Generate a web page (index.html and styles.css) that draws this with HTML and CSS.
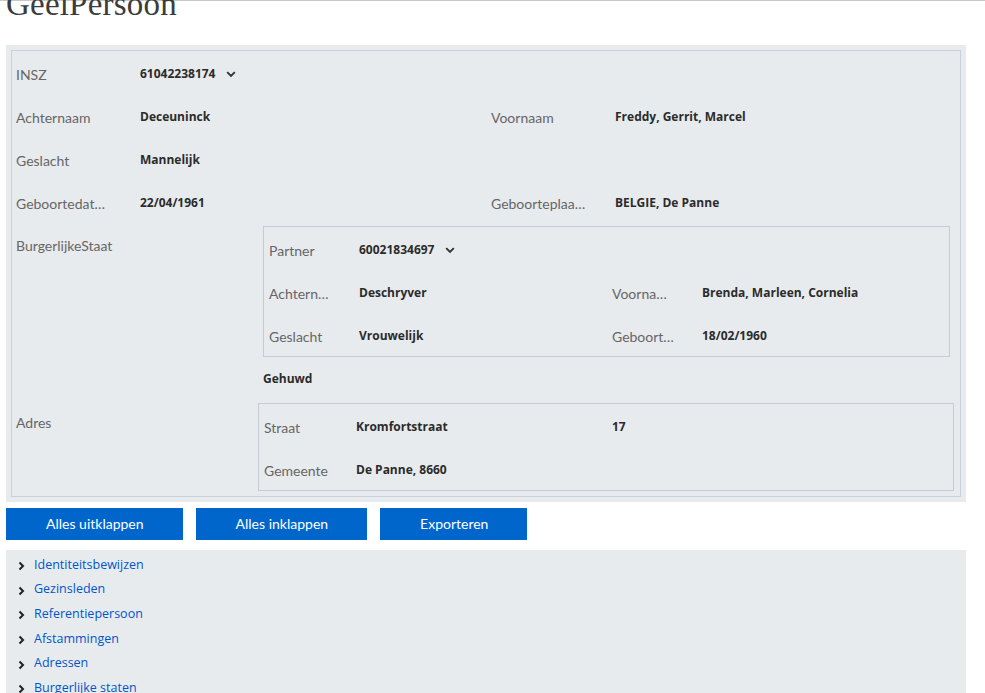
FILE: index.html
```html
<!DOCTYPE html>
<html lang="nl">
<head>
<meta charset="utf-8">
<title>GeelPersoon</title>
<link rel="stylesheet" href="styles.css">
</head>
<body>
<header class="page-header">
  <h1 class="page-title">GeelPersoon</h1>
</header>

<section class="record">
  <div class="record-inner">
    <div class="row">
      <div class="field">
        <span class="label">INSZ</span>
        <span class="value">61042238174</span>
        <svg class="chev-down" width="10" height="7" viewBox="0 0 10 7"><polyline points="1.2,1.2 5,5 8.8,1.2" fill="none" stroke="#333" stroke-width="1.9"/></svg>
      </div>
    </div>
    <div class="row">
      <div class="field">
        <span class="label">Achternaam</span>
        <span class="value">Deceuninck</span>
      </div>
      <div class="field field--right">
        <span class="label">Voornaam</span>
        <span class="value">Freddy, Gerrit, Marcel</span>
      </div>
    </div>
    <div class="row">
      <div class="field">
        <span class="label">Geslacht</span>
        <span class="value">Mannelijk</span>
      </div>
    </div>
    <div class="row">
      <div class="field">
        <span class="label">Geboortedat…</span>
        <span class="value">22/04/1961</span>
      </div>
      <div class="field field--right">
        <span class="label">Geboorteplaa…</span>
        <span class="value">BELGIE, De Panne</span>
      </div>
    </div>

    <div class="complex">
      <span class="label label--wide">BurgerlijkeStaat</span>
      <div class="nested">
        <div class="subbox subbox--partner">
          <div class="row">
            <div class="field field--sub">
              <span class="label label--sub">Partner</span>
              <span class="value">60021834697</span>
              <svg class="chev-down" width="10" height="7" viewBox="0 0 10 7"><polyline points="1.2,1.2 5,5 8.8,1.2" fill="none" stroke="#333" stroke-width="1.9"/></svg>
            </div>
          </div>
          <div class="row">
            <div class="field field--sub">
              <span class="label label--sub">Achtern…</span>
              <span class="value">Deschryver</span>
            </div>
            <div class="field field--right">
              <span class="label label--sub">Voorna…</span>
              <span class="value">Brenda, Marleen, Cornelia</span>
            </div>
          </div>
          <div class="row">
            <div class="field field--sub">
              <span class="label label--sub">Geslacht</span>
              <span class="value">Vrouwelijk</span>
            </div>
            <div class="field field--right">
              <span class="label label--sub">Geboort…</span>
              <span class="value">18/02/1960</span>
            </div>
          </div>
        </div>
        <div class="row row--plain">
          <span class="value">Gehuwd</span>
        </div>
      </div>
    </div>

    <div class="complex">
      <span class="label label--wide">Adres</span>
      <div class="nested">
        <div class="subbox subbox--address">
          <div class="row">
            <div class="field field--addr">
              <span class="label label--addr">Straat</span>
              <span class="value">Kromfortstraat</span>
            </div>
            <div class="field field--right">
              <span class="value">17</span>
            </div>
          </div>
          <div class="row">
            <div class="field field--addr">
              <span class="label label--addr">Gemeente</span>
              <span class="value">De Panne, 8660</span>
            </div>
          </div>
        </div>
      </div>
    </div>
  </div>
</section>

<div class="actions">
  <button class="btn" type="button">Alles uitklappen</button>
  <button class="btn" type="button">Alles inklappen</button>
  <button class="btn" type="button">Exporteren</button>
</div>

<nav class="sections">
  <a class="section-link" href="#"><svg class="chev-right" width="7" height="10" viewBox="0 0 7 10"><polyline points="1.5,1.5 5,5 1.5,8.5" fill="none" stroke="#222" stroke-width="2"/></svg>Identiteitsbewijzen</a>
  <a class="section-link" href="#"><svg class="chev-right" width="7" height="10" viewBox="0 0 7 10"><polyline points="1.5,1.5 5,5 1.5,8.5" fill="none" stroke="#222" stroke-width="2"/></svg>Gezinsleden</a>
  <a class="section-link" href="#"><svg class="chev-right" width="7" height="10" viewBox="0 0 7 10"><polyline points="1.5,1.5 5,5 1.5,8.5" fill="none" stroke="#222" stroke-width="2"/></svg>Referentiepersoon</a>
  <a class="section-link" href="#"><svg class="chev-right" width="7" height="10" viewBox="0 0 7 10"><polyline points="1.5,1.5 5,5 1.5,8.5" fill="none" stroke="#222" stroke-width="2"/></svg>Afstammingen</a>
  <a class="section-link" href="#"><svg class="chev-right" width="7" height="10" viewBox="0 0 7 10"><polyline points="1.5,1.5 5,5 1.5,8.5" fill="none" stroke="#222" stroke-width="2"/></svg>Adressen</a>
  <a class="section-link" href="#"><svg class="chev-right" width="7" height="10" viewBox="0 0 7 10"><polyline points="1.5,1.5 5,5 1.5,8.5" fill="none" stroke="#222" stroke-width="2"/></svg>Burgerlijke staten</a>
</nav>
</body>
</html>
```
FILE: styles.css
```css
html, body {
  margin: 0;
  padding: 0;
  background: #fff;
}

body {
  font-family: Lato, "Open Sans", sans-serif;
  color: #333;
  overflow: hidden;
}

.page-header {
  border-top: 1px solid #c8c8c8;
}

.page-title {
  margin: -15px 0 0 6px;
  font-family: "Liberation Serif", "DejaVu Serif", serif;
  font-weight: normal;
  font-size: 33px;
  line-height: 37px;
  color: #3c3c3c;
  letter-spacing: 0.2px;
}

.record {
  margin: 22px 19px 0 6px;
  padding: 5px;
  background: #e8ebee;
}

.record-inner {
  border: 1px solid #c9d0d6;
  padding: 0 6px 5px 4px;
}

.row {
  display: flex;
  align-items: flex-start;
  height: 43px;
  padding-top: 14px;
  box-sizing: border-box;
}

.row--plain {
  padding-left: 5px;
  padding-top: 13px;
}

.field {
  display: flex;
  align-items: flex-start;
  width: 475px;
  flex: none;
}

.field--right {
  width: auto;
  flex: 1;
  min-width: 0;
}

.field--sub {
  width: 343px;
}

.field--addr {
  width: 348px;
}

.label {
  width: 124px;
  flex: none;
  font-family: Lato, "Open Sans", sans-serif;
  font-size: 14px;
  line-height: 20px;
  color: #666;
  white-space: nowrap;
}

.label--wide {
  width: 242px;
  padding-top: 13px;
}

.label--sub {
  width: 90px;
}

.label--addr {
  width: 92px;
}

.value {
  font-family: "Open Sans", "Noto Sans", sans-serif;
  font-weight: bold;
  font-size: 12px;
  line-height: 17px;
  color: #2b2b2b;
  white-space: nowrap;
}

.chev-down {
  margin: 6px 0 0 11px;
}

.complex {
  display: flex;
  align-items: flex-start;
}

.nested {
  flex: 1;
  min-width: 0;
  padding-top: 3px;
}

.subbox {
  border: 1px solid #c5ccd3;
  padding: 0 5px;
}

.subbox--partner {
  margin: 0 4px 0 5px;
}

.actions {
  display: flex;
  gap: 13px;
  margin: 6px 0 0 6px;
}

.btn {
  height: 32px;
  padding: 0 39px 0 40px;
  border: 0;
  border-radius: 0;
  background: #0066cc;
  color: #fff;
  font-family: Lato, "Open Sans", sans-serif;
  font-size: 14px;
  line-height: 32px;
  cursor: pointer;
}

.sections {
  margin: 10px 19px 0 6px;
  padding: 2px 0 10px 12px;
  background: #e8ebee;
  display: flex;
  flex-direction: column;
}

.section-link {
  display: flex;
  align-items: center;
  height: 24.6px;
  font-family: "Open Sans", "Noto Sans", sans-serif;
  font-size: 12.5px;
  color: #0055cc;
  text-decoration: none;
}

.chev-right {
  flex: none;
  margin: 4px 9px 0 0;
}
```
